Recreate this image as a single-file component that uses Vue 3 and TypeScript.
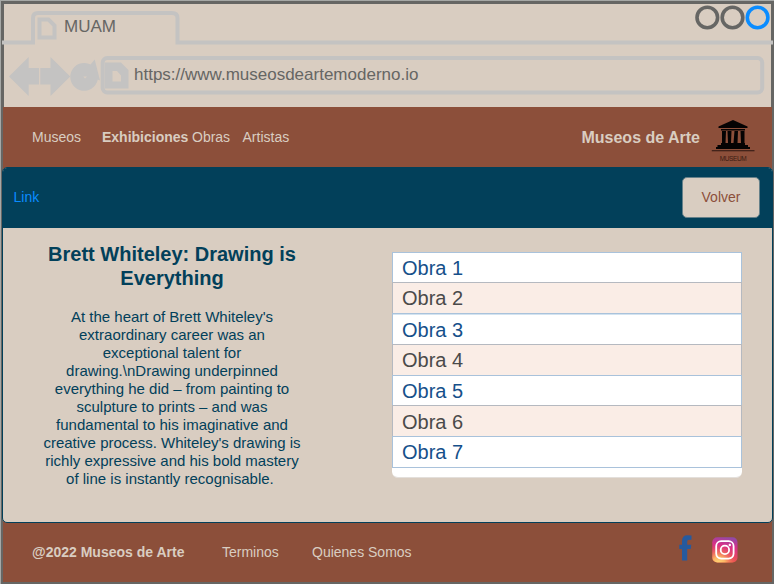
<script setup lang="ts">
interface Artwork {
  id: number
  label: string
}

const artworks: Artwork[] = Array.from({ length: 7 }, (_, i) => ({
  id: i + 1,
  label: `Obra ${i + 1}`,
}))

const description: string[] = [
  "At the heart of Brett Whiteley's",
  'extraordinary career was an',
  'exceptional talent for',
  'drawing.\\nDrawing underpinned',
  'everything he did – from painting to',
  'sculpture to prints – and was',
  'fundamental to his imaginative and',
  "creative process. Whiteley's drawing is",
  'richly expressive and his bold mastery',
  'of line is instantly recognisable.\u00a0',
]
</script>

<template>
  <div class="window">
    <header class="chrome">
      <svg class="chrome-art" width="774" height="107" viewBox="0 0 774 107">
        <g fill="none" stroke="#c4c3c2" stroke-width="4">
          <path d="M2 42.5H33V18q0-5 5-5H172q5.500 0 5.500 5V42.500H773" />
          <rect x="102.700" y="58" width="659.500" height="34.500" rx="4.500" />
          <path d="M39.500 19.500H48.500L54.500 25.500V37.500H39.500Z" />
        </g>
        <g fill="#c4c3c2">
          <path d="M9 76.500L28.700 57V68H39V84.500H28.700V96Z" />
          <path d="M70.200 76.500L50.500 57V68H40.300V84.500H50.500V96Z" />
          <path fill-rule="evenodd" d="M105 62.500H121L128.500 70V88.500H105ZM112.500 71V81.500H121V75.500L117 71Z" />
          <path fill-rule="evenodd" d="M90.500 64.500L94.700 59.500L100 80.500L97.800 79.500A13.900 13.900 0 1 1 90.500 64.500ZM83.300 76.500L85 78.500L87 76.500Z" />
        </g>
        <g fill="none" stroke-width="3.600">
          <circle cx="707.300" cy="17.500" r="10.300" stroke="#666664" />
          <circle cx="732.500" cy="17.500" r="10.300" stroke="#666664" />
          <circle cx="757.600" cy="17.500" r="10.300" stroke="#0a8cff" />
        </g>
      </svg>
      <div class="tab-title">MUAM</div>
      <div class="address">https://www.museosdeartemoderno.io</div>
    </header>

    <nav class="navbar">
      <a class="nav-museos">Museos</a>
      <a class="nav-exhib">Exhibiciones</a>
      <a class="nav-obras">Obras</a>
      <a class="nav-artistas">Artistas</a>
      <strong class="brand">Museos de Arte</strong>
      <svg class="museum" width="44" height="46" viewBox="0 0 44 46">
        <g fill="#050303">
          <path d="M22 1L36.500 7.500V9H7.500V7.500Z" />
          <path d="M10 10H34V11.500H10ZM11 12H15L14.500 24H11ZM16.500 12H20.500L20 24H17ZM23.500 12H27L26.500 24H22.500ZM29.500 12H33.500V24H30ZM10 24H34V26H10ZM6.500 26H37V28.500H6.500ZM5 28H39V30H5Z" />
          <path d="M.8 31.200H43.500V32.300H.8Z" fill="#2b1510" />
        </g>
        <text x="22.200" y="41.800" text-anchor="middle" class="museum-label" textLength="27">MUSEUM</text>
      </svg>
    </nav>

    <div class="stage">
      <main class="panel">
        <div class="toolbar">
          <a class="link">Link</a>
          <button class="back" type="button">Volver</button>
        </div>
        <div class="content">
          <article class="story">
            <h1>Brett Whiteley: Drawing is<br />Everything</h1>
            <p><span v-for="line in description" :key="line">{{ line }}</span></p>
          </article>
          <ul class="works">
            <li v-for="work in artworks" :key="work.id">{{ work.label }}</li>
          </ul>
        </div>
      </main>
    </div>

    <footer class="footer">
      <strong class="copyright">@2022 Museos de Arte</strong>
      <a class="terms">Terminos</a>
      <a class="about">Quienes Somos</a>
      <svg class="facebook" width="13" height="26" viewBox="0 0 13 26">
        <path d="M12.500.4V4.700H10Q8.200 4.700 8.200 6.500V9.700H12.300L11.700 14H8.200V25.600H3V14H.3V9.700H3V6Q3 .3 8.500.3Z" fill="#265a9e" />
      </svg>
      <svg class="instagram" width="26" height="26" viewBox="0 0 26 26">
        <defs>
          <linearGradient id="ig-base" x1="0.700" y1="0" x2="0.500" y2="1">
            <stop offset="0" stop-color="#8f4aa8" />
            <stop offset="0.350" stop-color="#d6308a" />
            <stop offset="1" stop-color="#ee5844" />
          </linearGradient>
          <radialGradient id="ig-glow" cx="0.250" cy="1.050" r="0.750">
            <stop offset="0" stop-color="#ffdc75" />
            <stop offset="0.350" stop-color="#fbb565" />
            <stop offset="1" stop-color="#ef4c58" stop-opacity="0" />
          </radialGradient>
        </defs>
        <rect x=".3" y=".3" width="25.200" height="25.200" rx="5" fill="url(#ig-base)" />
        <rect x=".3" y=".3" width="25.200" height="25.200" rx="5" fill="url(#ig-glow)" />
        <g fill="none" stroke="#fff" stroke-width="1.800">
          <rect x="4.200" y="4.200" width="17.400" height="17.400" rx="5" />
          <circle cx="12.900" cy="12.900" r="4.200" />
        </g>
        <circle cx="17.800" cy="8" r="1.200" fill="#fff" />
      </svg>
    </footer>
  </div>
</template>

<style>
body {
  margin: 0;
  background: #666664;
}
</style>

<style scoped>
* {
  box-sizing: border-box;
}

.window {
  position: relative;
  width: 774px;
  height: 584px;
  overflow: hidden;
  background: #666664;
  border-left: 1px solid #a6a8a6;
  border-top: 1px solid #a6a8a6;
  font-family: 'Liberation Sans', Arial, sans-serif;
  font-size: 14px;
  color: #d9cdc1;
}

.chrome {
  height: 103px;
  margin: 3px 3px 0;
  background: #d9cdc1;
  color: #666664;
  font-size: 17px;
  line-height: 20px;
}

.chrome-art {
  position: absolute;
  left: -1px;
  top: -1px;
}

.tab-title,
.address {
  position: relative;
  white-space: nowrap;
}

.tab-title {
  padding: 13px 0 0 60px;
}

.address {
  padding: 28px 0 0 130px;
}

.navbar,
.footer {
  display: flex;
  align-items: center;
  margin: 0 2px;
  background: #8c4f3a;
  white-space: nowrap;
}

.navbar {
  height: 60px;
  padding-left: 29px;
}

.nav-museos { width: 70px; }
.nav-exhib { width: 90px; font-weight: bold; }
.nav-obras { width: 50.500px; }

.brand {
  margin-left: auto;
  padding-top: 2px;
  font-size: 16px;
}

.museum {
  margin: 10px 17px 0 11px;
}

.museum-label {
  font-size: 6.500px;
  fill: #3a1c13;
}

.stage {
  margin: 0 2px;
  background: #8c4f3a;
}

.panel {
  height: 356px;
  margin: 0 -1px;
  border: 1px solid #02405a;
  border-radius: 5px;
  background: #d9cdc1;
  overflow: hidden;
}

.toolbar {
  display: flex;
  align-items: center;
  justify-content: space-between;
  height: 60px;
  padding: 0 12px 2px 10.500px;
  background: #02405a;
}

.link {
  color: #0a8cff;
}

.back {
  width: 78px;
  height: 41px;
  padding: 0;
  border: 1px solid #66818a;
  border-radius: 5px;
  background: #d9cdc1;
  color: #8c4f3a;
  font: inherit;
}

.content {
  display: flex;
  align-items: flex-start;
}

.story {
  width: 338px;
  padding-top: 14px;
  color: #02405a;
  text-align: center;
}

.story h1 {
  margin: 0;
  font-size: 20px;
  line-height: 24px;
}

.story p {
  margin: 18px 0 0;
  font-size: 15px;
  line-height: 18px;
}

.story span {
  display: block;
  white-space: nowrap;
}

.works {
  display: grid;
  grid-template-rows: 30px 31px 31px 31px 30px 31px 32px;
  width: 350px;
  height: 226px;
  margin: 24px 0 0 51px;
  padding: 0;
  list-style: none;
  background: #fff;
  border-bottom: 1px solid #e3dfdb;
  border-radius: 0 0 6px 6px;
}

.works li {
  padding-left: 9px;
  border: 1px solid #a9c2db;
  border-bottom: 0;
  background: #fff;
  color: #16508a;
  font-size: 20px;
  line-height: 30px;
}

.works li:nth-child(even) {
  background: #faede6;
  border-color: #b5b9c0;
  color: #4a4a4a;
}

.works li:nth-child(3) {
  box-shadow: inset 0 1px #d3e3f0;
  padding-top: 1px;
}

.works li:nth-child(6) {
  padding-top: 1px;
}

.works li:last-child {
  border-bottom: 1px solid #a9c2db;
}

.footer {
  height: 59px;
  padding: 0 34px 2px 29px;
}

.copyright { width: 190px; }
.terms { width: 90px; }
.facebook { margin: -8px 20px 0 auto; }
.instagram { margin-top: -4px; }
</style>
